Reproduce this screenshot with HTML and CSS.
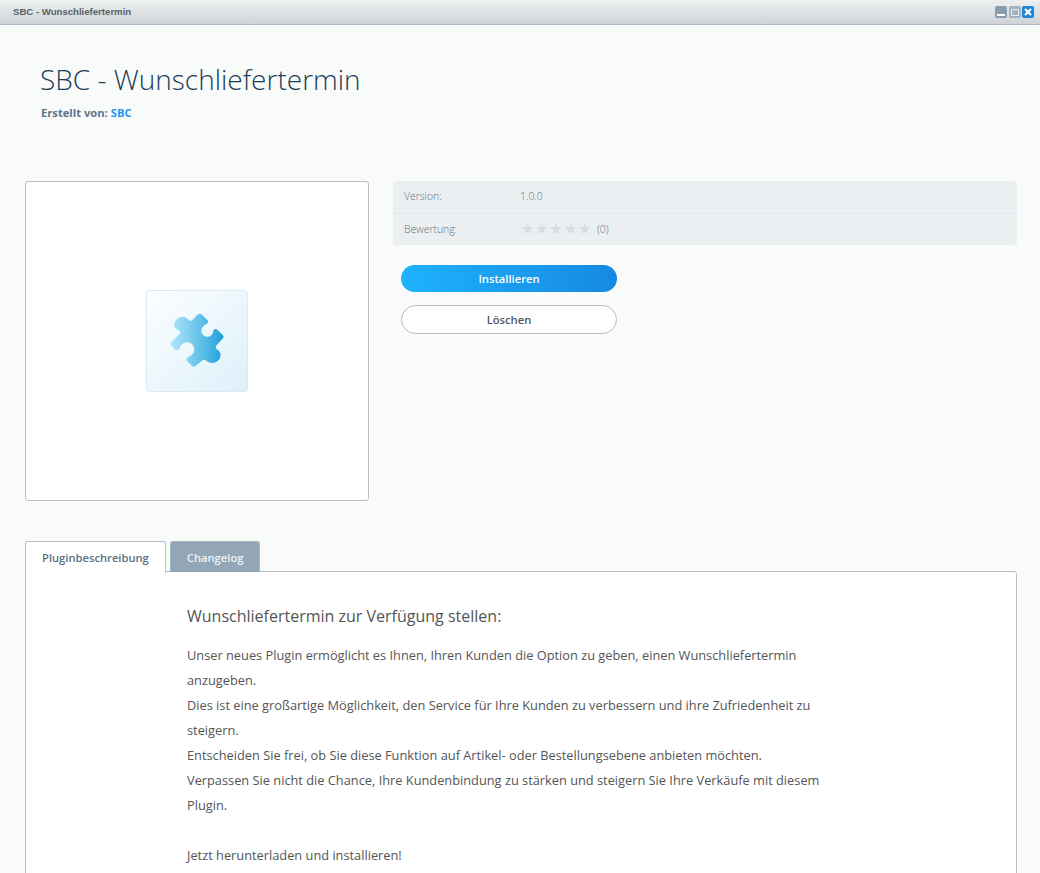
FILE: index.html
```html
<!DOCTYPE html>
<html lang="de">
<head>
    <meta charset="UTF-8">
    <title>SBC - Wunschliefertermin</title>
    <link rel="stylesheet" href="styles.css">
</head>
<body>

<div class="window">
    <div class="titlebar">
        <span class="titlebar-text">SBC - Wunschliefertermin</span>
        <div class="window-buttons">
            <span class="win-btn win-min"><i></i></span>
            <span class="win-btn win-max"><i></i></span>
            <span class="win-btn win-close">
                <svg width="10" height="10" viewBox="0 0 10 10"><path d="M2 2l6 6M8 2l-6 6" stroke="#fff" stroke-width="2.2" fill="none"/></svg>
            </span>
        </div>
    </div>

    <div class="content">
        <div class="header">
            <h1>SBC - Wunschliefertermin</h1>
            <p class="author">Erstellt von: <a href="#">SBC</a></p>
        </div>

        <div class="detail">
            <div class="preview">
                <div class="plugin-icon">
                    <svg width="60" height="60" viewBox="110 95 180 180">
                        <defs>
                            <linearGradient id="puzzleFill" x1="0" y1="0" x2="1" y2="0">
                                <stop offset="0" stop-color="#b0e6fa"/>
                                <stop offset="0.45" stop-color="#73c9ec"/>
                                <stop offset="1" stop-color="#1fa1db"/>
                            </linearGradient>
                        </defs>
                        <path fill="url(#puzzleFill)" d="M203 105Q208 101 213 105L232 123Q235 127 232 131L220 140A18 18 0 1 0 249 153L253 150Q257 148 261 151L278 168Q282 172 278 177L257 199Q254 204 258 208Q270 216 271 226Q270 246 248 251Q236 253 226 243Q222 239 217 243L195 260Q190 264 185 260L170 245Q166 240 170 236L178 231A22 22 0 1 0 148 207L143 211Q138 214 133 210L122 198Q118 193 122 188L147 165Q152 160 147 155Q132 148 131 136Q134 118 152 113Q166 110 176 123Q180 127 185 123Z"/>
                    </svg>
                </div>
            </div>

            <div class="info">
                <div class="info-table">
                    <div class="info-row">
                        <span class="info-label">Version:</span>
                        <span class="info-value">1.0.0</span>
                    </div>
                    <div class="info-row">
                        <span class="info-label">Bewertung:</span>
                        <span class="info-value rating">
                            <span class="stars">★★★★★</span>
                            <span>(0)</span>
                        </span>
                    </div>
                </div>
                <div class="actions">
                    <button class="btn btn-primary">Installieren</button>
                    <button class="btn btn-default">Löschen</button>
                </div>
            </div>
        </div>

        <div class="tabs">
            <div class="tab tab-active">Pluginbeschreibung</div>
            <div class="tab">Changelog</div>
        </div>
        <div class="tab-panel">
            <h2>Wunschliefertermin zur Verfügung stellen:</h2>
            <p>Unser neues Plugin ermöglicht es Ihnen, Ihren Kunden die Option zu geben, einen Wunschliefertermin anzugeben.<br>
            Dies ist eine großartige Möglichkeit, den Service für Ihre Kunden zu verbessern und ihre Zufriedenheit zu steigern.<br>
            Entscheiden Sie frei, ob Sie diese Funktion auf Artikel- oder Bestellungsebene anbieten möchten.<br>
            Verpassen Sie nicht die Chance, Ihre Kundenbindung zu stärken und steigern Sie Ihre Verkäufe mit diesem Plugin.<br>
            <br>
            Jetzt herunterladen und installieren!</p>
        </div>
    </div>
</div>

</body>
</html>
```

FILE: styles.css
```css
html, body {
    height: 100%;
}

body {
    margin: 0;
    font-family: "Open Sans", sans-serif;
    background-color: #f9fbfb;
    overflow: hidden;
}

.window {
    height: 100%;
    overflow: hidden;
}

.titlebar {
    height: 24px;
    display: flex;
    align-items: center;
    justify-content: space-between;
    padding: 0 6px 0 13px;
    background: linear-gradient(to bottom, #eef0f1, #ced3d7);
    border-bottom: 1px solid #a9b9c6;
}

.titlebar-text {
    font-family: "Liberation Sans", Arial, sans-serif;
    font-size: 9.6px;
    font-weight: bold;
    color: #56626d;
    position: relative;
    top: -1px;
}

.window-buttons {
    display: flex;
    gap: 1px;
}

.win-btn {
    width: 12px;
    height: 12px;
    border-radius: 2px;
    display: flex;
    align-items: center;
    justify-content: center;
    background: #8b9dac;
}

.win-min i {
    width: 8px;
    height: 2px;
    background: #fff;
    margin-top: 6px;
}

.win-max {
    background: #a5b2bd;
    margin-left: 1px;
}

.win-max i {
    width: 6px;
    height: 5px;
    border: 1px solid #e6ebef;
}

.win-close {
    background: #1b87dc;
}

.content {
    padding: 0 23px 0 25px;
}

.header {
    padding: 35px 0 0 16px;
    height: 121px;
}

.header h1 {
    margin: 0 0 0 -1px;
    font-size: 28px;
    line-height: 38px;
    font-weight: 300;
    color: #1c3d56;
}

.author {
    margin: 7px 0 0;
    font-size: 11.2px;
    line-height: 16px;
    font-weight: 700;
    color: #607385;
}

.author a {
    color: #1e96f0;
    text-decoration: none;
}

.detail {
    display: flex;
    gap: 24px;
    height: 320px;
}

.preview {
    width: 342px;
    flex-shrink: 0;
    display: flex;
    align-items: center;
    justify-content: center;
    background: #fff;
    border: 1px solid #b9bfc4;
    border-radius: 3px;
}

.plugin-icon {
    width: 100px;
    height: 100px;
    display: flex;
    align-items: center;
    justify-content: center;
    background: linear-gradient(135deg, #fbfeff, #def0fa);
    border: 1px solid #dbe9f2;
    border-radius: 3px;
}

.info {
    flex: 1;
}

.info-table {
    background: #ebeff2;
    border-radius: 3px;
    font-size: 10.4px;
    font-weight: 300;
    color: #5f6f7c;
}

.info-row {
    display: flex;
    align-items: center;
    box-sizing: border-box;
    height: 32px;
    padding: 0 0 2px 11px;
}

.info-row + .info-row {
    border-top: 1px solid #e1e6ea;
}

.info-label {
    width: 116px;
}

.rating {
    display: flex;
    align-items: center;
    gap: 5px;
}

.stars {
    margin-left: 1px;
    font-family: "DejaVu Sans", sans-serif;
    font-size: 15px;
    line-height: 14px;
    letter-spacing: 1.2px;
    color: #d3dde5;
}

.actions {
    display: flex;
    flex-direction: column;
    align-items: flex-start;
    gap: 13px;
    margin: 20px 0 0 8px;
}

.btn {
    width: 216px;
    font-family: "Open Sans", sans-serif;
    font-size: 11.2px;
    font-weight: 600;
    border-radius: 15px;
    padding: 0;
}

.btn-primary {
    height: 27px;
    color: #fff;
    border: none;
    background: linear-gradient(to right, #1fb2fd, #1589e2);
}

.btn-default {
    height: 29px;
    color: #52575c;
    background: #fff;
    border: 1px solid #b9bcbf;
}

.tabs {
    display: flex;
    gap: 4px;
    margin-top: 40px;
    height: 30px;
    position: relative;
    z-index: 1;
}

.tab {
    height: 30px;
    line-height: 32px;
    padding: 0 16px;
    font-size: 11.2px;
    font-weight: 600;
    color: #eef2f5;
    background: #92a6b5;
    border: 1px solid #a6b5c1;
    border-bottom: none;
    border-radius: 3px 3px 0 0;
}

.tab-active {
    height: 31px;
    color: #5a6f82;
    background: #fff;
    border-color: #b9bfc4;
}

.tab-panel {
    height: 400px;
    padding: 32px 0 0 161px;
    background: #fff;
    border: 1px solid #b9bfc4;
    border-radius: 3px 3px 0 0;
}

.tab-panel h2 {
    margin: 0 0 15px;
    font-size: 16px;
    line-height: 24px;
    font-weight: 400;
    color: #555;
}

.tab-panel p {
    margin: 0;
    width: 640px;
    font-size: 12.8px;
    line-height: 25px;
    color: #555;
}
```
